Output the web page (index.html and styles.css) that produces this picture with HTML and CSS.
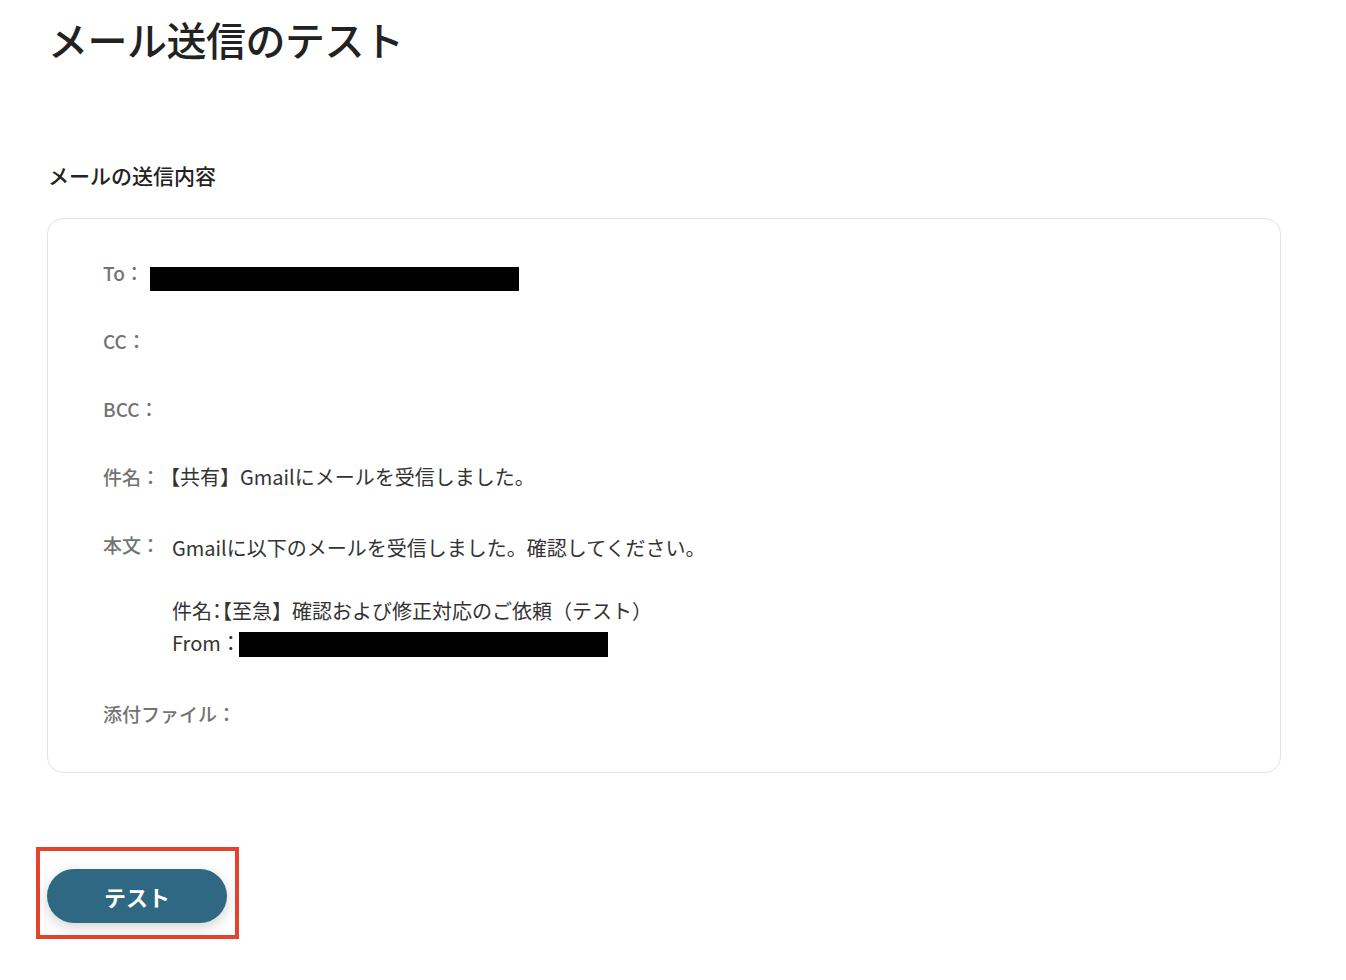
FILE: index.html
```html
<!DOCTYPE html>
<html lang="ja">
<head>
  <meta charset="UTF-8">
  <meta name="viewport" content="width=device-width, initial-scale=1.0">
  <title>メール送信のテスト</title>
  <link rel="stylesheet" href="styles.css">
</head>
<body>
  <div class="page">
    <h1 class="page-title">メール送信のテスト</h1>

    <h2 class="section-title">メールの送信内容</h2>

    <div class="mail-card">
      <div class="mail-row">
        <span class="mail-label">To：</span>
        <span class="redacted redacted-to"></span>
      </div>
      <div class="mail-row">
        <span class="mail-label">CC：</span>
      </div>
      <div class="mail-row">
        <span class="mail-label">BCC：</span>
      </div>
      <div class="mail-row">
        <span class="mail-label">件名：</span>
        <span class="mail-value">【共有】Gmailにメールを受信しました。</span>
      </div>
      <div class="mail-row">
        <span class="mail-label">本文：</span>
        <div class="mail-body">
          <div>Gmailに以下のメールを受信しました。確認してください。</div>
          <div>&nbsp;</div>
          <div>件名<span class="half">：</span>【至急】確認および修正対応のご依頼（テスト）</div>
          <div>From：<span class="redacted redacted-from"></span></div>
        </div>
      </div>
      <div class="mail-row">
        <span class="mail-label">添付ファイル：</span>
      </div>
    </div>

    <div class="highlight">
      <button class="test-button" type="button">テスト</button>
    </div>
  </div>
</body>
</html>
```

FILE: styles.css
```css
body {
  margin: 0;
  background-color: #ffffff;
  color: #222222;
  font-family: "Noto Sans CJK JP", "Noto Sans", sans-serif;
}
.page {
  padding: 11px 48px 40px 48px;
  display: flex;
  flex-direction: column;
  align-items: flex-start;
}
.page-title {
  margin: 0;
  font-size: 40px;
  line-height: 56px;
  font-weight: 500;
  color: #222222;
  letter-spacing: -0.5px;
}
.section-title {
  margin: 93px 0 0 0;
  font-size: 21px;
  line-height: 30px;
  font-weight: 500;
  color: #222222;
}
.mail-card {
  box-sizing: border-box;
  width: 1234px;
  margin: 28px 0 0 -1px;
  padding: 38px 55px 42px 55px;
  border: 1px solid #e3e3e3;
  border-radius: 16px;
  display: flex;
  flex-direction: column;
  gap: 36px;
}
.mail-row {
  display: flex;
  align-items: flex-start;
  min-height: 32px;
}
.mail-label {
  font-size: 19px;
  line-height: 32px;
  font-weight: 500;
  color: #737373;
  white-space: nowrap;
}
.mail-value {
  font-size: 20px;
  line-height: 32px;
  color: #333333;
}
.mail-body {
  margin: 3px 0 4px 12px;
  font-size: 20px;
  line-height: 31.5px;
  color: #333333;
}
.half {
  font-feature-settings: "halt";
}
.redacted {
  display: inline-block;
  background-color: #000000;
}
.redacted-to {
  width: 369px;
  height: 24px;
  margin: 10px 0 -2px 6px;
}
.redacted-from {
  width: 369px;
  height: 25px;
  margin-left: -2px;
  vertical-align: -6px;
}
.highlight {
  margin: 74px 0 0 -12px;
  padding: 18px 8px 12px 7px;
  border: 4px solid #e5432c;
}
.test-button {
  width: 180px;
  height: 54px;
  border: none;
  border-radius: 27px;
  background-color: #2e6882;
  color: #ffffff;
  font-family: "Noto Sans CJK JP", sans-serif;
  font-size: 22px;
  font-weight: 700;
  box-shadow: 0 4px 14px rgba(0, 0, 0, 0.18);
  cursor: pointer;
}
```
